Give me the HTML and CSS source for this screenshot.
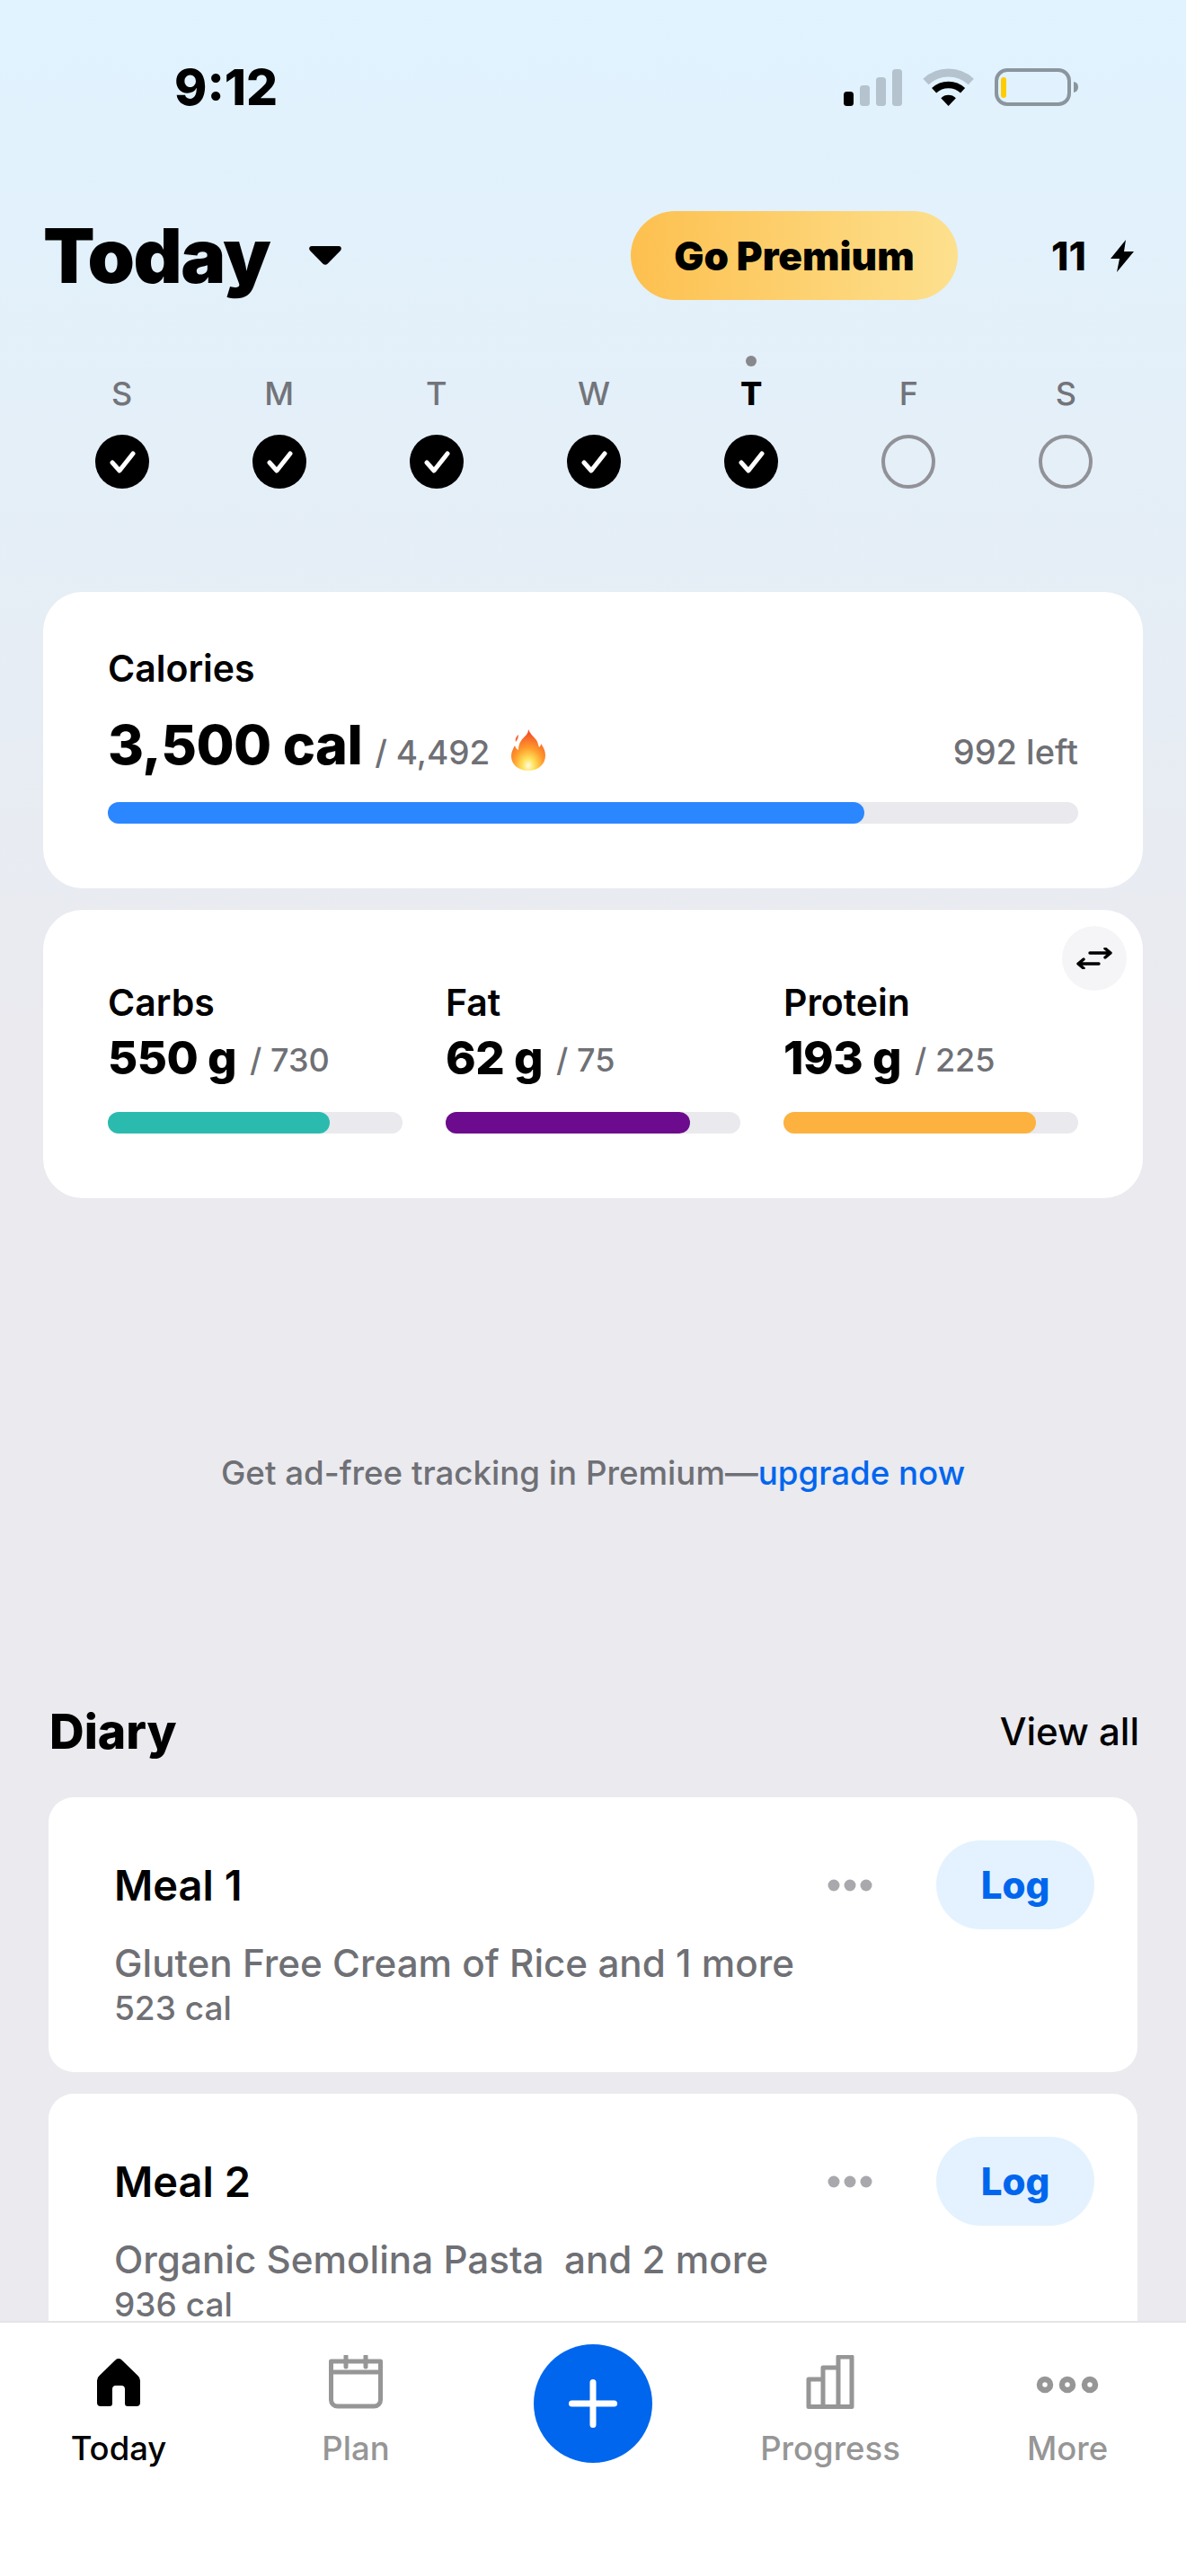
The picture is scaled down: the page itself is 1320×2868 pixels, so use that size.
FILE: index.html
```html
<!DOCTYPE html>
<html lang="en">
<head>
    <meta charset="UTF-8">
    <meta name="viewport" content="width=device-width, initial-scale=1.0">
    <title>Today</title>
    <link rel="stylesheet" href="styles.css">
</head>
<body>
    <div class="phone">
        <div class="content">
            <div class="status-bar">
                <div class="status-time">9:12</div>
                <div class="status-icons">
                    <svg class="icon-signal" viewBox="0 0 65 41">
                        <rect x="0" y="25" width="11" height="16" rx="3.5" fill="#000"/>
                        <rect x="18" y="18" width="11" height="23" rx="3.5" fill="#b4c3ce"/>
                        <rect x="36" y="9" width="11" height="32" rx="3.5" fill="#b4c3ce"/>
                        <rect x="54" y="0" width="11" height="41" rx="3.5" fill="#b4c3ce"/>
                    </svg>
                    <svg class="icon-wifi" viewBox="0 0 57 42">
                        <path d="M3.4 15A37 37 0 0 1 53.8 15" fill="none" stroke="#b4c3ce" stroke-width="9"/>
                        <path d="M12.6 24.8A23.5 23.5 0 0 1 44.6 24.8" fill="none" stroke="#000" stroke-width="7.5"/>
                        <path d="M28.6 42L20.3 33.2A12 12 0 0 1 36.9 33.2Z" fill="#000"/>
                    </svg>
                    <svg class="icon-battery" viewBox="0 0 93 42">
                        <rect x="2" y="2" width="81" height="38" rx="12" fill="none" stroke="#8b959e" stroke-width="4"/>
                        <rect x="7" y="10" width="6" height="23" rx="3" fill="#ffcc00"/>
                        <path d="M88 15a6 6 0 0 1 5 6a6 6 0 0 1-5 6Z" fill="#8b959e"/>
                    </svg>
                </div>
            </div>

            <div class="header">
                <div class="title-wrap">
                    <h1 class="page-title">Today</h1>
                    <svg class="caret" viewBox="0 0 36 21"><path d="M3 0H33C35.6 0 36.8 3 35 5L20.5 19.8C19 21.2 17 21.2 15.5 19.8L1 5C-.8 3 .4 0 3 0Z" fill="#000"/></svg>
                </div>
                <div class="premium-btn">Go Premium</div>
                <div class="streak">
                    <span>11</span>
                    <svg class="bolt" viewBox="0 0 26 36"><path d="M17 0L0 21H10L7 36L26 13H15Z" fill="#000"/></svg>
                </div>
            </div>

            <div class="week">
                <div class="day"><i class="day-dot"></i><span class="day-name">S</span><svg class="day-check" viewBox="0 0 60 60"><circle cx="30" cy="30" r="30" fill="#000"/><path d="M19 31l8 9 15-19" fill="none" stroke="#fff" stroke-width="5" stroke-linecap="round" stroke-linejoin="round"/></svg></div>
                <div class="day"><i class="day-dot"></i><span class="day-name">M</span><svg class="day-check" viewBox="0 0 60 60"><circle cx="30" cy="30" r="30" fill="#000"/><path d="M19 31l8 9 15-19" fill="none" stroke="#fff" stroke-width="5" stroke-linecap="round" stroke-linejoin="round"/></svg></div>
                <div class="day"><i class="day-dot"></i><span class="day-name">T</span><svg class="day-check" viewBox="0 0 60 60"><circle cx="30" cy="30" r="30" fill="#000"/><path d="M19 31l8 9 15-19" fill="none" stroke="#fff" stroke-width="5" stroke-linecap="round" stroke-linejoin="round"/></svg></div>
                <div class="day"><i class="day-dot"></i><span class="day-name">W</span><svg class="day-check" viewBox="0 0 60 60"><circle cx="30" cy="30" r="30" fill="#000"/><path d="M19 31l8 9 15-19" fill="none" stroke="#fff" stroke-width="5" stroke-linecap="round" stroke-linejoin="round"/></svg></div>
                <div class="day day-current"><i class="day-dot"></i><span class="day-name">T</span><svg class="day-check" viewBox="0 0 60 60"><circle cx="30" cy="30" r="30" fill="#000"/><path d="M19 31l8 9 15-19" fill="none" stroke="#fff" stroke-width="5" stroke-linecap="round" stroke-linejoin="round"/></svg></div>
                <div class="day"><i class="day-dot"></i><span class="day-name">F</span><div class="day-empty"></div></div>
                <div class="day"><i class="day-dot"></i><span class="day-name">S</span><div class="day-empty"></div></div>
            </div>

            <div class="card calories-card">
                <div class="label">Calories</div>
                <div class="cal-row">
                    <span class="cal-value">3,500 cal</span>
                    <span class="cal-goal">/ 4,492</span>
                    <svg class="flame" viewBox="0 0 38 46">
                        <defs>
                            <radialGradient id="flameFill" cx="50%" cy="88%" r="80%">
                                <stop offset="0" stop-color="#fffbe0"/>
                                <stop offset="0.22" stop-color="#ffe25a"/>
                                <stop offset="0.55" stop-color="#ff9a2b"/>
                                <stop offset="1" stop-color="#f4502a"/>
                            </radialGradient>
                        </defs>
                        <path d="M19 0C21 5 25 8 28 12C30 15 30 18 31 20C33 18 33 17 33 16C36 20 38 24 38 29C38 39 30 46 19 46C8 46 0 39 0 30C0 25 2 22 4 18C5 21 6 22 8 23C8 15 12 11 15 8C17 6 19 4 19 0Z" fill="url(#flameFill)"/>
                        <path d="M5 14C4 11 5 8 8 6C8 9 7 12 5 14Z" fill="#f4683a"/>
                    </svg>
                    <span class="cal-left">992 left</span>
                </div>
                <div class="track"><div class="fill fill-blue" style="width: 78%"></div></div>
            </div>

            <div class="card macros-card">
                <div class="swap-btn">
                    <svg class="swap-icon" viewBox="0 0 40 24"><path d="M15 6H38M32 1l6 5-6 5M25 18H2M8 13l-6 5 6 5" fill="none" stroke="#000" stroke-width="3.4" stroke-linecap="round" stroke-linejoin="round"/></svg>
                </div>
                <div class="macro">
                    <div class="label">Carbs</div>
                    <div class="macro-row"><span class="macro-value">550 g</span><span class="macro-goal">/ 730</span></div>
                    <div class="track"><div class="fill fill-teal" style="width: 75.3%"></div></div>
                </div>
                <div class="macro">
                    <div class="label">Fat</div>
                    <div class="macro-row"><span class="macro-value">62 g</span><span class="macro-goal">/ 75</span></div>
                    <div class="track"><div class="fill fill-purple" style="width: 83%"></div></div>
                </div>
                <div class="macro">
                    <div class="label">Protein</div>
                    <div class="macro-row"><span class="macro-value">193 g</span><span class="macro-goal">/ 225</span></div>
                    <div class="track"><div class="fill fill-orange" style="width: 85.6%"></div></div>
                </div>
            </div>

            <div class="ad-note">Get ad-free tracking in Premium—<a class="ad-link">upgrade now</a></div>

            <div class="diary-head">
                <h2 class="diary-title">Diary</h2>
                <span class="view-all">View all</span>
            </div>

            <div class="meal">
                <div class="meal-top">
                    <span class="meal-name">Meal 1</span>
                    <svg class="meal-dots" viewBox="0 0 50 14"><circle cx="7" cy="7" r="6.5" fill="#a9a9ad"/><circle cx="25" cy="7" r="6.5" fill="#a9a9ad"/><circle cx="43" cy="7" r="6.5" fill="#a9a9ad"/></svg>
                    <div class="log-btn">Log</div>
                </div>
                <div class="meal-foods">Gluten Free Cream of Rice and 1 more</div>
                <div class="meal-cals">523 cal</div>
            </div>

            <div class="meal">
                <div class="meal-top">
                    <span class="meal-name">Meal 2</span>
                    <svg class="meal-dots" viewBox="0 0 50 14"><circle cx="7" cy="7" r="6.5" fill="#a9a9ad"/><circle cx="25" cy="7" r="6.5" fill="#a9a9ad"/><circle cx="43" cy="7" r="6.5" fill="#a9a9ad"/></svg>
                    <div class="log-btn">Log</div>
                </div>
                <div class="meal-foods">Organic Semolina Pasta&nbsp; and 2 more</div>
                <div class="meal-cals">936 cal</div>
            </div>
        </div>

        <nav class="tabbar">
            <div class="tab tab-active">
                <svg class="tab-icon" viewBox="0 0 60 60"><path d="M26.5 5.5a5 5 0 0 1 7 0L51 22.5a8 8 0 0 1 3 6V53a4 4 0 0 1-4 4H40a3 3 0 0 1-3-3V38a4 4 0 0 0-4-4h-6a4 4 0 0 0-4 4V54a3 3 0 0 1-3 3H10a4 4 0 0 1-4-4V28.5a8 8 0 0 1 3-6Z" fill="#000"/></svg>
                <span class="tab-label">Today</span>
            </div>
            <div class="tab">
                <svg class="tab-icon" viewBox="0 0 60 60"><path d="M2.5 7H57.5V50a7 7 0 0 1-7 7H9.500a7 7 0 0 1-7-7ZM2.500 19H57.500M19 1V13M41 1V13" fill="none" stroke="#969696" stroke-width="5" stroke-linecap="round" stroke-linejoin="round"/></svg>
                <span class="tab-label">Plan</span>
            </div>
            <div class="add-btn">
                <svg class="add-icon" viewBox="0 0 54 54"><path d="M27 3.500V50.500M3.500 27H50.500" fill="none" stroke="#fff" stroke-width="7" stroke-linecap="round"/></svg>
            </div>
            <div class="tab">
                <svg class="tab-icon" viewBox="0 0 60 60"><path d="M6 57.500V27H22V57.500ZM22 57.500V14H39V57.500ZM39 57.500V2H54V57.500ZM6 57.500H54" fill="none" stroke="#969696" stroke-width="5" stroke-linejoin="round"/></svg>
                <span class="tab-label">Progress</span>
            </div>
            <div class="tab">
                <svg class="tab-icon" viewBox="0 0 72 60"><circle cx="11" cy="33" r="6" fill="none" stroke="#969696" stroke-width="6.500"/><circle cx="36" cy="33" r="6" fill="none" stroke="#969696" stroke-width="6.500"/><circle cx="61" cy="33" r="6" fill="none" stroke="#969696" stroke-width="6.500"/></svg>
                <span class="tab-label">More</span>
            </div>
        </nav>
    </div>
</body>
</html>
```

FILE: styles.css
```css
* {
    box-sizing: border-box;
}

body {
    margin: 0;
    background: #fff;
    font-family: Inter, "Liberation Sans", sans-serif;
    color: #000;
}

.phone {
    display: flex;
    flex-direction: column;
    width: 1320px;
    height: 2868px;
    overflow: hidden;
    background: linear-gradient(to bottom, #e0f3ff 0, #eaeaef 1150px);
}

.content {
    flex: 1;
    min-height: 0;
    overflow: hidden;
}

/* status bar */
.status-bar {
    display: flex;
    justify-content: space-between;
    align-items: center;
    height: 192px;
    padding: 2px 120px 0 194px;
}

.status-time {
    font-size: 55px;
    font-weight: 800;
    line-height: 60px;
}

.status-icons {
    display: flex;
    align-items: flex-end;
    gap: 23px;
}

.icon-signal { width: 65px; height: 41px; }
.icon-wifi { width: 57px; height: 42px; }
.icon-battery { width: 93px; height: 42px; }

/* header */
.header {
    display: flex;
    align-items: center;
    height: 99px;
    margin-top: 43px;
    padding: 0 58px 0 48px;
}

.title-wrap {
    display: flex;
    align-items: center;
    flex: 1;
}

.page-title {
    margin: 0;
    font-size: 84px;
    font-weight: 900;
    line-height: 99px;
    letter-spacing: -1.5px;
}

.caret {
    width: 36px;
    height: 21px;
    margin-left: 44px;
}

.premium-btn {
    display: flex;
    justify-content: center;
    align-items: center;
    width: 364px;
    height: 99px;
    border-radius: 50px;
    background: linear-gradient(to right, #fdc04f, #fde08e);
    font-size: 44px;
    font-weight: 900;
}

.streak {
    display: flex;
    justify-content: space-between;
    align-items: center;
    width: 92px;
    margin-left: 104px;
    font-size: 44px;
    font-weight: 800;
}

.bolt {
    flex: none;
    width: 26px;
    height: 36px;
}

/* week row */
.week {
    display: grid;
    grid-template-columns: repeat(7, 1fr);
    margin-top: 62px;
    padding: 0 46px 0 48px;
}

.day {
    display: flex;
    flex-direction: column;
    align-items: center;
}

.day-dot {
    width: 12px;
    height: 12px;
    border-radius: 50%;
}

.day-name {
    margin-top: 10px;
    font-size: 36px;
    font-weight: 500;
    line-height: 40px;
    color: #72747a;
}

.day-check,
.day-empty {
    width: 60px;
    height: 60px;
    margin-top: 26px;
}

.day-empty {
    border: 4px solid #919298;
    border-radius: 50%;
}

.day-current .day-dot {
    background: #87888d;
}

.day-current .day-name {
    font-weight: 800;
    color: #000;
}

/* cards */
.card {
    position: relative;
    margin: 0 48px;
    border-radius: 44px;
    background: #fff;
}

.calories-card {
    height: 330px;
    margin-top: 115px;
    padding: 60px 72px 0;
}

.label {
    font-size: 41px;
    font-weight: 600;
    line-height: 50px;
}

.cal-row {
    display: flex;
    align-items: baseline;
    height: 100px;
    margin-top: 24px;
}

.cal-value {
    font-size: 61px;
    font-weight: 800;
    line-height: 72px;
    letter-spacing: -0.5px;
}

.cal-goal {
    margin-left: 14px;
    font-size: 37px;
    font-weight: 500;
    color: #6f7075;
}

.flame {
    align-self: center;
    width: 38px;
    height: 46px;
    margin: 0 0 16px 24px;
}

.cal-left {
    margin-left: auto;
    font-size: 38px;
    font-weight: 500;
    color: #6f7075;
}

.track {
    height: 24px;
    border-radius: 12px;
    background: #e9e9ee;
}

.fill {
    height: 100%;
    border-radius: 12px;
}

.fill-blue { background: #2b87ff; }
.fill-teal { background: #2bbbae; }
.fill-purple { background: #6c0b8d; }
.fill-orange { background: #fdb23f; }

.macros-card {
    display: grid;
    grid-template-columns: repeat(3, 1fr);
    gap: 48px;
    height: 321px;
    margin-top: 24px;
    padding: 78px 72px 0;
}

.macro-row {
    display: flex;
    height: 66px;
    margin-top: 7px;
}

.macro .track {
    margin-top: 24px;
}

.macro-value {
    font-size: 51px;
    font-weight: 800;
    line-height: 60px;
    letter-spacing: -0.5px;
}

.macro-goal {
    margin: 2px 0 0 15px;
    font-size: 36px;
    font-weight: 500;
    line-height: 60px;
    color: #6f7075;
}

.swap-btn {
    position: absolute;
    top: 18px;
    right: 18px;
    display: flex;
    justify-content: center;
    align-items: center;
    width: 72px;
    height: 72px;
    border-radius: 50%;
    background: #f5f5f8;
}

.swap-icon {
    width: 40px;
    height: 24px;
}

/* ad line */
.ad-note {
    padding-top: 280px;
    text-align: center;
    font-size: 36.7px;
    font-weight: 500;
    line-height: 52px;
    color: #6f7075;
}

.ad-link {
    color: #0066ee;
}

/* diary */
.diary-head {
    display: flex;
    justify-content: space-between;
    align-items: center;
    height: 50px;
    margin: 236px 52px 49px 55px;
}

.diary-title {
    margin: 0;
    font-size: 53.5px;
    font-weight: 800;
}

.view-all {
    font-size: 42px;
    font-weight: 500;
}

.meal {
    height: 306px;
    margin: 0 54px 24px;
    padding: 48px 48px 0 73px;
    border-radius: 28px;
    background: #fff;
}

.meal-top {
    display: flex;
    align-items: center;
    height: 99px;
}

.meal-name {
    flex: 1;
    font-size: 47px;
    font-weight: 600;
}

.meal-dots {
    width: 50px;
    height: 14px;
    margin-right: 71px;
}

.log-btn {
    display: flex;
    justify-content: center;
    align-items: center;
    width: 176px;
    height: 99px;
    border-radius: 50px;
    background: #e3f2fe;
    font-size: 42px;
    font-weight: 800;
    color: #0066ee;
}

.meal-foods {
    margin-top: 13px;
    font-size: 42.2px;
    font-weight: 500;
    line-height: 50px;
    color: #6f7075;
}

.meal-cals {
    margin-top: 7px;
    font-size: 37px;
    font-weight: 500;
    line-height: 36px;
    color: #6f7075;
}

/* bottom tabs */
.tabbar {
    flex: none;
    display: grid;
    grid-template-columns: repeat(5, 264px);
    height: 284px;
    border-top: 2px solid #e4e4e6;
    background: #fff;
}

.tab {
    display: flex;
    flex-direction: column;
    align-items: center;
    padding-top: 36px;
}

.tab-icon {
    height: 60px;
}

.tab-label {
    margin-top: 22px;
    font-size: 36.5px;
    font-weight: 500;
    line-height: 44px;
    color: #969696;
}

.tab-active .tab-label {
    color: #000;
}

.add-btn {
    display: flex;
    justify-content: center;
    align-items: center;
    justify-self: center;
    width: 132px;
    height: 132px;
    margin-top: 24px;
    border-radius: 50%;
    background: #0066ee;
}

.add-icon {
    width: 54px;
    height: 54px;
}
```
